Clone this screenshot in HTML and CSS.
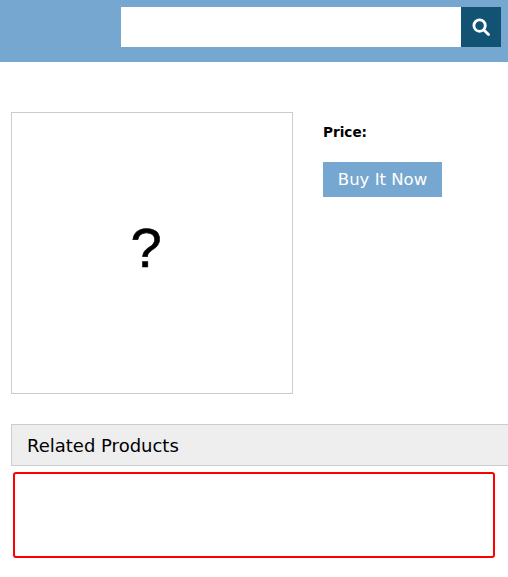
FILE: index.html
```html
<!DOCTYPE html>
<html lang="en">
<head>
  <meta charset="UTF-8">
  <title>Product</title>
  <link rel="stylesheet" href="styles.css">
</head>
<body>
  <div class="header">
    <form class="search">
      <input type="text" class="search-input">
      <button type="button" class="search-btn" aria-label="Search">
        <svg width="18" height="18" viewBox="0 0 18 18">
          <circle cx="7.6" cy="7.6" r="5.7" fill="none" stroke="#fff" stroke-width="2.8"/>
          <path d="M11.9 11.9l4.6 4.6" fill="none" stroke="#fff" stroke-width="2.8" stroke-linecap="round"/>
        </svg>
      </button>
    </form>
  </div>

  <div class="product">
    <div class="photo"><span class="unknown">?</span></div>
    <div class="info">
      <p class="price">Price:</p>
      <a class="buy-btn" href="#">Buy It Now</a>
    </div>
  </div>

  <h2 class="related-title">Related Products</h2>
  <div class="related-box"></div>
</body>
</html>
```

FILE: styles.css
```css
body {
  margin: 0;
  font-family: "DejaVu Sans", Verdana, sans-serif;
  background: #fff;
  color: #000;
  overflow-x: hidden;
}
.header {
  height: 62px;
  background: #76a7d0;
  padding: 7px 7px 0 0;
  box-sizing: border-box;
}
.search {
  display: flex;
  justify-content: flex-end;
}
.search-input {
  width: 340px;
  height: 40px;
  box-sizing: border-box;
  border: none;
  padding: 0 10px;
  background: #fff;
}
.search-btn {
  width: 40px;
  height: 40px;
  border: none;
  padding: 0;
  background: #125373;
  display: flex;
  align-items: center;
  justify-content: center;
}
.product {
  display: flex;
  margin: 50px 0 0 11px;
}
.photo {
  width: 282px;
  height: 282px;
  box-sizing: border-box;
  border: 1px solid #ccc;
  display: flex;
  justify-content: center;
  padding: 99px 12px 0 0;
}
.unknown {
  font-family: "Liberation Sans", Arial, sans-serif;
  font-size: 56px;
  line-height: 72px;
  -webkit-text-stroke: 0.6px #000;
}
.info {
  margin-left: 30px;
}
.price {
  margin: 12px 0 0;
  font-size: 13.6px;
  line-height: 16px;
  font-weight: bold;
}
.buy-btn {
  display: block;
  width: 119px;
  height: 35px;
  margin-top: 22px;
  background: #76a7d0;
  color: #fff;
  font-size: 16.5px;
  line-height: 36px;
  text-align: center;
  text-decoration: none;
}
.related-title {
  margin: 30px 0 0 11px;
  height: 42px;
  box-sizing: border-box;
  border: 1px solid #ccc;
  border-right: none;
  background: #eee;
  padding-left: 15px;
  font-size: 18px;
  font-weight: normal;
  line-height: 41px;
}
.related-box {
  width: 482px;
  height: 86px;
  box-sizing: border-box;
  margin: 6px 0 0 13px;
  border: 2px solid #f00;
  border-radius: 3px;
}
```
